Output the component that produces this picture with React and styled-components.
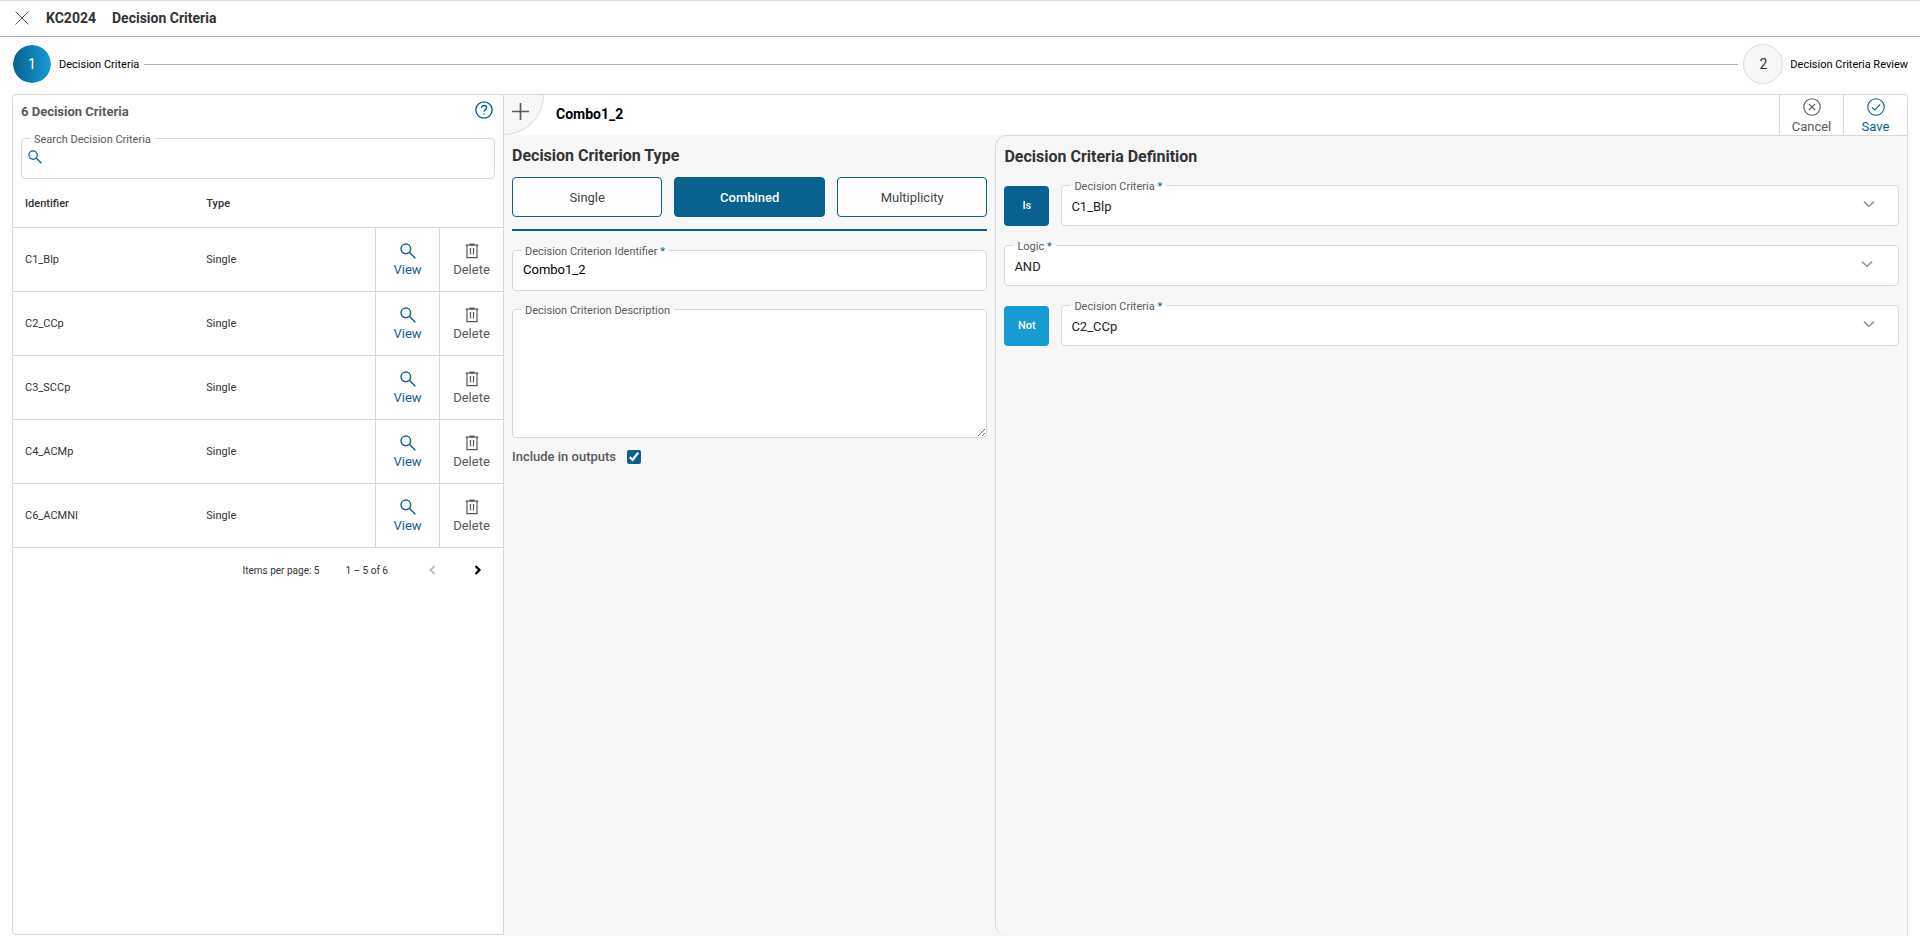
import React, { useState } from 'react';
import styled, { createGlobalStyle } from 'styled-components';

const criteria = ['C1_Blp', 'C2_CCp', 'C3_SCCp', 'C4_ACMp', 'C6_ACMNI'];
const types = ['Single', 'Combined', 'Multiplicity'];

function Icon({ name, size = 16 }) {
    return (
        <Svg width={size} height={size} viewBox="0 0 16 16" aria-hidden="true">
            {name === 'close' && <path d="M1.5 1.5l13 13M14.5 1.5l-13 13" />}
            {name === 'plus' && <path d="M8 0v16M0 8h16" strokeWidth="1.6" />}
            {name === 'search' && <g strokeWidth="1.4"><circle cx="5.8" cy="5.8" r="4.8" /><path d="M9.3 9.2l6 6" /></g>}
            {name === 'trash' && (
                <g strokeWidth="1.2">
                    <path d="M1.6 2.2h12.8M5.5 1h5M3 2.2v12.4h10V2.2M6.5 5v6.6M9.5 5v6.6" />
                </g>
            )}
            {name === 'cancel' && <><circle cx="8" cy="8" r="7.3" /><path d="M5.2 5.2l5.6 5.6M10.8 5.2l-5.6 5.6" /></>}
            {name === 'save' && <><circle cx="8" cy="8" r="7.3" /><path d="M4.4 8.4l2.5 2.3 4.7-5" /></>}
            {name === 'help' && (
                <>
                    <circle cx="8" cy="8" r="7.2" strokeWidth="1.2" />
                    <path d="M5.8 6.2c0-1.4 1-2.2 2.3-2.2s2.2.8 2.2 2c0 1.6-2.2 1.7-2.2 3.6M8.1 11v1.3" strokeWidth="1.2" />
                </>
            )}
            {name === 'left' && <path d="M10.5 4l-4 4 4 4" strokeWidth="1.8" />}
            {name === 'right' && <path d="M5.5 4l4 4-4 4" strokeWidth="2.2" />}
            {name === 'down' && <path d="M2.2 5.4L8 10.6l5.8-5.2" strokeWidth="1.9" />}
        </Svg>
    );
}

function SelectField({ id, label, value, inset }) {
    return (
        <Field>
            <FieldLabel htmlFor={id}>{label} <Star>*</Star></FieldLabel>
            <Select id={id} defaultValue={value}>
                <option>{value}</option>
            </Select>
            <Arrow $inset={inset}><Icon name="down" size={14} /></Arrow>
        </Field>
    );
}

function CriteriaList() {
    return (
        <ListPanel>
            <ListHead>
                <ListTitle>6 Decision Criteria</ListTitle>
                <IconButton $color="#08618f" aria-label="Help"><Icon name="help" size={18} /></IconButton>
            </ListHead>
            <SearchField>
                <FieldLabel htmlFor="search">Search Decision Criteria</FieldLabel>
                <SearchIcon><Icon name="search" size={14} /></SearchIcon>
                <SearchInput id="search" type="text" />
            </SearchField>
            <Table>
                <colgroup>
                    <IdentifierCol />
                    <col />
                    <ActionCol />
                    <ActionCol />
                </colgroup>
                <thead>
                    <tr>
                        <Th>Identifier</Th>
                        <Th>Type</Th>
                        <Th colSpan={2} />
                    </tr>
                </thead>
                <tbody>
                    {criteria.map((item) => (
                        <tr key={item}>
                            <Td>{item}</Td>
                            <Td>Single</Td>
                            <ActionCell><Action $color="#08618f"><Icon name="search" />View</Action></ActionCell>
                            <ActionCell><Action $color="#58595b"><Icon name="trash" />Delete</Action></ActionCell>
                        </tr>
                    ))}
                </tbody>
            </Table>
            <Paginator>
                <PageSize>Items per page: 5</PageSize>
                <span>1 – 5 of 6</span>
                <Pages>
                    <PageButton aria-label="Previous page" disabled><Icon name="left" /></PageButton>
                    <PageButton aria-label="Next page"><Icon name="right" /></PageButton>
                </Pages>
            </Paginator>
        </ListPanel>
    );
}

function App() {
    const [type, setType] = useState('Combined');

    return (
        <Page>
            <GlobalStyle />
            <Header>
                <IconButton $color="#58595b" aria-label="Close"><Icon name="close" /></IconButton>
                <HeaderTitle>KC2024</HeaderTitle>
                <HeaderTitle>Decision Criteria</HeaderTitle>
            </Header>
            <Stepper>
                <Step><StepCircle $active>1</StepCircle>Decision Criteria</Step>
                <StepLine />
                <Step><StepCircle>2</StepCircle>Decision Criteria Review</Step>
            </Stepper>
            <Main>
                <CriteriaList />
                <Editor>
                    <Toolbar>
                        <AddButton aria-label="Add criterion"><Icon name="plus" size={17} /></AddButton>
                        <ToolbarTitle>Combo1_2</ToolbarTitle>
                        <ToolbarCell><Action $color="#58595b"><Icon name="cancel" size={18} />Cancel</Action></ToolbarCell>
                        <ToolbarCell><Action $color="#08618f"><Icon name="save" size={18} />Save</Action></ToolbarCell>
                    </Toolbar>
                    <Columns>
                        <TypeColumn>
                            <Heading>Decision Criterion Type</Heading>
                            <TypeButtons>
                                {types.map((t) => (
                                    <TypeButton key={t} $active={t === type} onClick={() => setType(t)}>{t}</TypeButton>
                                ))}
                            </TypeButtons>
                            <TypeFields>
                                <Field>
                                    <FieldLabel htmlFor="identifier">Decision Criterion Identifier <Star>*</Star></FieldLabel>
                                    <Input id="identifier" type="text" defaultValue="Combo1_2" />
                                </Field>
                                <Field>
                                    <FieldLabel htmlFor="description">Decision Criterion Description</FieldLabel>
                                    <TextArea id="description" />
                                </Field>
                            </TypeFields>
                            <CheckRow>
                                <label htmlFor="outputs">Include in outputs</label>
                                <Checkbox id="outputs" type="checkbox" defaultChecked />
                            </CheckRow>
                        </TypeColumn>
                        <Definition>
                            <Heading>Decision Criteria Definition</Heading>
                            <DefinitionRows>
                                <DefinitionRow>
                                    <Toggle $color="#08618f">Is</Toggle>
                                    <SelectField id="first" label="Decision Criteria" value="C1_Blp" inset={23} />
                                </DefinitionRow>
                                <DefinitionRow>
                                    <SelectField id="logic" label="Logic" value="AND" inset={25} />
                                </DefinitionRow>
                                <DefinitionRow>
                                    <Toggle $color="#189ad3">Not</Toggle>
                                    <SelectField id="second" label="Decision Criteria" value="C2_CCp" inset={23} />
                                </DefinitionRow>
                            </DefinitionRows>
                        </Definition>
                    </Columns>
                </Editor>
            </Main>
        </Page>
    );
}

export default App;

const GlobalStyle = createGlobalStyle`
    * {
        box-sizing: border-box;
    }
    body {
        margin: 0;
        background: #fff;
        color: #333;
        font-family: Roboto, "Liberation Sans", sans-serif;
        font-size: 13px;
    }
    button, input, select, textarea {
        margin: 0;
        font-family: inherit;
    }
    button {
        padding: 0;
        border: 0;
        background: none;
        cursor: pointer;
    }
`

const Svg = styled.svg`
    display: block;
    flex: none;
    fill: none;
    stroke: currentColor;
`

const Page = styled.div`
    min-height: 100vh;
    display: flex;
    flex-direction: column;
    border-top: 1px solid #dcdcdc;
    padding-bottom: 10px;
`

const Header = styled.header`
    height: 36px;
    padding: 0 14px 2px;
    display: flex;
    align-items: center;
    gap: 16px;
    border-bottom: 1px solid #a3b5ba;
`

const HeaderTitle = styled.h1`
    margin: 0;
    font-size: 14px;
    font-weight: 700;
`

const IconButton = styled.button`
    color: ${props => props.$color};
`

const Stepper = styled.div`
    height: 57px;
    padding: 0 12px 3px;
    display: flex;
    align-items: center;
    gap: 5px;
`

const Step = styled.div`
    display: flex;
    align-items: center;
    gap: 7px;
    color: #000;
    font-size: 11px;
`

const StepCircle = styled.span`
    width: 40px;
    height: 40px;
    display: grid;
    place-items: center;
    border: 1px solid ${props => props.$active ? '#fff' : '#d4dadb'};
    border-radius: 50%;
    background: ${props => props.$active ? 'linear-gradient(90deg, #08618f, #189ad3)' : '#f7f7f7'};
    background-clip: padding-box;
    color: ${props => props.$active ? '#fff' : '#333'};
    font-size: 14px;
`

const StepLine = styled.span`
    flex: 1;
    height: 1px;
    background: #a3b5ba;
`

const Main = styled.main`
    flex: 1;
    margin: 0 12px;
    display: grid;
    grid-template-columns: 492px minmax(0, 1fr);
`

const ListPanel = styled.section`
    margin-bottom: 1px;
    border: 1px solid #d4dadb;
    border-radius: 4px 0 0 4px;
`

const ListHead = styled.div`
    height: 43px;
    padding: 6px 10px 0 8px;
    display: flex;
    justify-content: space-between;
    align-items: flex-start;
`

const ListTitle = styled.h2`
    margin: 2px 0 0;
    color: #58595b;
    font-size: 13px;
    line-height: 18px;
    font-weight: 700;
`

const Field = styled.div`
    position: relative;
    flex: 1;
    display: flex;
`

const FieldLabel = styled.label`
    position: absolute;
    top: -5px;
    left: 9px;
    padding: 0 4px;
    background: linear-gradient(transparent 5px, #fff 5px);
    color: #58595b;
    font-size: 11px;
    line-height: 14px;
`

const Star = styled.span`
    color: #08618f;
`

const Input = styled.input`
    width: 100%;
    height: 41px;
    padding: 0 10px 2px;
    border: 1px solid #d4dadb;
    border-radius: 4px;
    background: #fff;
    color: #000;
    font-size: 13px;
`

const TextArea = styled.textarea`
    width: 100%;
    height: 129px;
    padding: 10px;
    border: 1px solid #d4dadb;
    border-radius: 4px;
    background: #fff;
    font-size: 13px;
    resize: vertical;
`

const Select = styled.select`
    width: 100%;
    height: 41px;
    padding: 2px 9px 0;
    appearance: none;
    border: 1px solid #d4dadb;
    border-radius: 4px;
    background: #fff;
    color: #222;
    font-family: inherit;
    font-size: 13px;
`

const Arrow = styled.span`
    position: absolute;
    top: 12px;
    right: ${props => props.$inset}px;
    color: #999;
    pointer-events: none;
`

const SearchField = styled(Field)`
    margin: 0 8px;
`

const SearchInput = styled(Input)`
    padding-left: 28px;
`

const SearchIcon = styled.span`
    position: absolute;
    top: 12px;
    left: 7px;
    color: #08618f;
`

const Table = styled.table`
    width: 100%;
    table-layout: fixed;
    border-collapse: separate;
    border-spacing: 0;
    font-size: 11px;
`

const IdentifierCol = styled.col`
    width: 37%;
`

const ActionCol = styled.col`
    width: 64px;
`

const Th = styled.th`
    height: 49px;
    padding: 0 12px;
    border-bottom: 1px solid #d4dadb;
    font-weight: 500;
    text-align: left;
`

const Td = styled.td`
    height: 64px;
    padding: 0 12px;
    border-bottom: 1px solid #d4dadb;
`

const ActionCell = styled(Td)`
    padding: 2px 0 0;
    border-left: 1px solid #d4dadb;
`

const Action = styled.button`
    width: 100%;
    display: flex;
    flex-direction: column;
    align-items: center;
    gap: 2px;
    color: ${props => props.$color};
    font-size: 13px;
    line-height: 18px;
`

const Paginator = styled.div`
    height: 44px;
    padding-right: 17px;
    display: flex;
    justify-content: flex-end;
    align-items: center;
    font-size: 10px;
`

const PageSize = styled.span`
    margin-right: 26px;
`

const Pages = styled.div`
    margin-left: 36px;
    display: flex;
    gap: 30px;
`

const PageButton = styled.button`
    color: #000;

    &:disabled {
        color: #bdbdbd;
    }
`

const Editor = styled.section`
    display: flex;
    flex-direction: column;
    border-top: 1px solid #d4dadb;
    border-top-right-radius: 4px;
    background: #f7f7f7;
`

const Toolbar = styled.div`
    height: 40px;
    display: flex;
    border-right: 1px solid #d4dadb;
    border-top-right-radius: 4px;
    background: #fff;
`

const AddButton = styled.button`
    width: 40px;
    height: 40px;
    padding: 0 7px 7px 0;
    display: grid;
    place-items: center;
    border: 1px solid #d4dadb;
    border-width: 0 1px 1px 0;
    border-bottom-right-radius: 40px;
    background: #f7f7f7;
    color: #58595b;
`

const ToolbarTitle = styled.h2`
    flex: 1;
    margin: 0;
    padding-left: 12px;
    color: #000;
    font-size: 14px;
    line-height: 38px;
    font-weight: 700;
`

const ToolbarCell = styled.div`
    width: 64px;
    padding-top: 3px;
    border-left: 1px solid #d4dadb;
`

const Columns = styled.div`
    flex: 1;
    display: grid;
    grid-template-columns: minmax(0, 35fr) minmax(0, 65fr);
`

const TypeColumn = styled.div`
    padding: 11px 8px;
`

const Heading = styled.h2`
    margin: 0 0 11px;
    font-size: 16px;
    line-height: 20px;
    font-weight: 700;
`

const TypeButtons = styled.div`
    padding-bottom: 12px;
    display: flex;
    gap: 12px;
    border-bottom: 2px solid #08618f;
`

const TypeButton = styled.button`
    flex: 1;
    height: 40px;
    border: 1px solid #08618f;
    border-radius: 4px;
    background: ${props => props.$active ? '#08618f' : '#fff'};
    color: ${props => props.$active ? '#fff' : '#444'};
    font-size: 13px;
    font-weight: ${props => props.$active ? 500 : 400};
`

const TypeFields = styled.div`
    padding: 19px 0 11px;
    display: flex;
    flex-direction: column;
    gap: 18px;
`

const CheckRow = styled.div`
    display: flex;
    align-items: center;
    gap: 11px;
    color: #58595b;
    font-weight: 500;
`

const Checkbox = styled.input`
    width: 14px;
    height: 14px;
    accent-color: #08618f;
`

const Definition = styled.div`
    padding: 11px 8px;
    border: 1px solid #d4dadb;
    border-bottom: 0;
    border-radius: 12px 0 0 12px;
`

const DefinitionRows = styled.div`
    padding-top: 7px;
    display: flex;
    flex-direction: column;
    gap: 19px;
`

const DefinitionRow = styled.div`
    display: flex;
    align-items: center;
    gap: 12px;
`

const Toggle = styled.button`
    width: 45px;
    height: 40px;
    border-radius: 4px;
    background: ${props => props.$color};
    color: #fff;
    font-size: 11px;
    font-weight: 500;
`
